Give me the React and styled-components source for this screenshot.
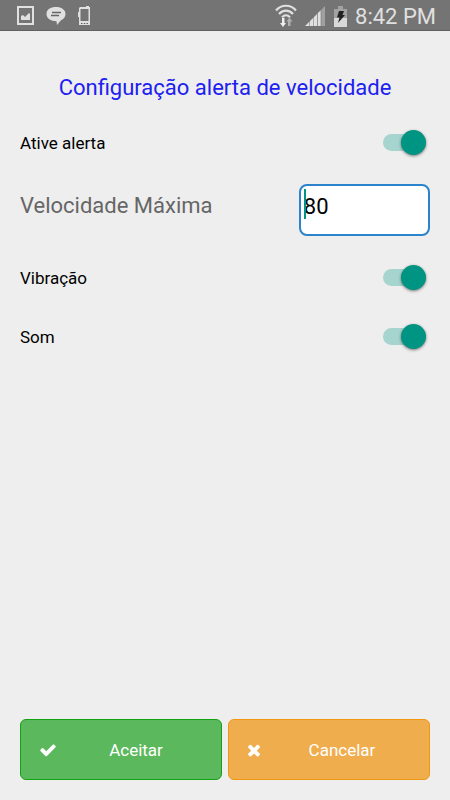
import React, { useState } from 'react'
import styled, { createGlobalStyle } from 'styled-components'

const App = () => {
    const [alertOn, setAlertOn] = useState(true)
    const [speed, setSpeed] = useState('80')
    const [vibrate, setVibrate] = useState(true)
    const [sound, setSound] = useState(true)

  return (
    <Screen>
        <GlobalStyle />
        <StatusBar>
            <StatusIcons>
                <PictureIcon />
                <MessageIcon />
                <PhoneIcon />
            </StatusIcons>
            <SystemIcons>
                <WifiIcon />
                <SignalIcon />
                <BatteryIcon />
                <Clock>8:42 PM</Clock>
            </SystemIcons>
        </StatusBar>
        <Form onSubmit={(e) => e.preventDefault()}>
            <Title>Configuração alerta de velocidade</Title>
            <Row>
                <Label htmlFor="alert">Ative alerta</Label>
                <Switch id="alert" checked={alertOn} onChange={(e) => setAlertOn(e.target.checked)} />
            </Row>
            <SpeedRow>
                <SpeedLabel htmlFor="speed">Velocidade Máxima</SpeedLabel>
                <SpeedBox>
                    <SpeedInput id="speed" inputMode="numeric" value={speed} onChange={(e) => setSpeed(e.target.value)} />
                    <Caret />
                </SpeedBox>
            </SpeedRow>
            <Row>
                <Label htmlFor="vibrate">Vibração</Label>
                <Switch id="vibrate" checked={vibrate} onChange={(e) => setVibrate(e.target.checked)} />
            </Row>
            <Row>
                <Label htmlFor="sound">Som</Label>
                <Switch id="sound" checked={sound} onChange={(e) => setSound(e.target.checked)} />
            </Row>
            <Actions>
                <Button type="submit" $color="#5cb85c" $border="#12a312">
                    <svg width="16" height="18" viewBox="121 0 1550 1792" fill="currentColor" aria-hidden="true">
                        <path d="M1671 566q0 40-28 68l-724 724-136 136q-28 28-68 28t-68-28l-136-136-362-362q-28-28-28-68t28-68l136-136q28-28 68-28t68 28l294 295 656-657q28-28 68-28t68 28l136 136q28 28 28 68z" />
                    </svg>
                    <ButtonText>Aceitar</ButtonText>
                </Button>
                <Button type="button" $color="#f0ad4e" $border="#f0960f">
                    <svg width="12" height="18" viewBox="302 0 1188 1792" fill="currentColor" aria-hidden="true">
                        <path d="M1490 1322q0 40-28 68l-136 136q-28 28-68 28t-68-28l-294-294-294 294q-28 28-68 28t-68-28l-136-136q-28-28-28-68t28-68l294-294-294-294q-28-28-28-68t28-68l136-136q28-28 68-28t68 28l294 294 294-294q28-28 68-28t68 28l136 136q28 28 28 68t-28 68l-294 294 294 294q28 28 28 68z" />
                    </svg>
                    <ButtonText>Cancelar</ButtonText>
                </Button>
            </Actions>
        </Form>
    </Screen>
  )
}

export default App

const PictureIcon = () => (
    <svg width="18" height="20" viewBox="0 0 18 20" aria-hidden="true">
        <path fill="#e0e0e0" fillRule="evenodd" d="M0 0h17v19H0zM2 2v15h13V2z" />
        <path fill="#e0e0e0" d="M4 14v-4l2-1 2 2 4-4 1 1v6z" />
    </svg>
)

const MessageIcon = () => (
    <svg width="20" height="20" viewBox="0 0 20 20" aria-hidden="true">
        <path fill="#e0e0e0" d="M10 1c5.500 0 9.500 2.700 9.500 7 0 3-1.800 5-4.500 6.200L11 19l-.5-3.800C4.800 15.200.5 12.500.5 8S4.500 1 10 1z" />
        <path stroke="#666" strokeWidth="1.300" d="M6 6.500h9M5 9.500h8" />
    </svg>
)

const PhoneIcon = () => (
    <svg width="14" height="20" viewBox="0 0 14 20" aria-hidden="true">
        <path fill="#e0e0e0" fillRule="evenodd" d="M3 1h6V0h3v1h1v18H2v-8H1V6h1V2zM3.500 3v12h8V3z" />
        <path stroke="#606060" d="M4 17.500h1.500M6.800 17.500h1.500M9.500 17.500H11" />
    </svg>
)

const WifiIcon = () => (
    <svg width="22" height="24" viewBox="0 0 22 24" aria-hidden="true">
        <g fill="none" stroke="#e0e0e0" strokeWidth="2.200">
            <path d="M1 6.500c5.500-6.300 14.500-6.300 20 0" />
            <path d="M4 10c4-4.500 10-4.500 14 0" />
            <path d="M7 13.200c2.500-2.600 5.500-2.600 8 0" />
        </g>
        <path fill="#f0f0f0" d="M7 14h2.500v5H11l-3 4-3-4h2z" />
        <path fill="#b0b0b0" d="M13 22v-4.500h-1.500l3-4 3 4h-2V22z" />
    </svg>
)

const SignalIcon = () => (
    <svg width="21" height="20" viewBox="0 0 21 20" aria-hidden="true">
        <path fill="#e0e0e0" d="M0 20l4.500-4.500V20zM5 15l3.500-3.500V20H5zM9 11l3-3v12H9zM12.700 7.300l3-3V20h-3z" />
        <path fill="#a0a0a0" d="M16.300 3.700L20 0v20h-3.700z" />
    </svg>
)

const BatteryIcon = () => (
    <svg width="13" height="21" viewBox="0 0 13 21" aria-hidden="true">
        <path fill="#a2a2a2" d="M4 0h5v3h4v9H0V3h4z" />
        <path fill="#d8d8d8" d="M0 12h13v9H0z" />
        <path fill="#222" d="M5 5h5L8.500 9H11l-7 8 1.500-5.500H3z" />
    </svg>
)

const Switch = (props) => (
    <SwitchBox>
        <SwitchInput type="checkbox" role="switch" {...props} />
    </SwitchBox>
)

const GlobalStyle = createGlobalStyle`
    * {
        box-sizing: border-box;
    }
    body {
        margin: 0;
        background-color: #eee;
        font-family: Roboto, 'Liberation Sans', sans-serif;
        color: #000;
    }
`
const Screen = styled.div`
    min-height: 100vh;
    display: flex;
    flex-direction: column;
`
const StatusBar = styled.header`
    height: 31px;
    padding: 2px 14px 0 17px;
    display: flex;
    align-items: center;
    justify-content: space-between;
    background-color: #747474;
    border-bottom: 1px solid #606060;
    color: #e0e0e0;
`
const StatusIcons = styled.div`
    display: flex;
    align-items: center;
    gap: 11px;
`
const SystemIcons = styled.div`
    display: flex;
    align-items: center;
    gap: 8px;
`
const Clock = styled.span`
    padding-top: 2px;
    font-size: 22px;
    line-height: 26px;
    white-space: nowrap;
`
const Form = styled.form`
    flex: 1;
    display: flex;
    flex-direction: column;
    padding: 40px 20px 20px;
`
const Title = styled.h1`
    margin: 0 0 8px;
    font-size: 22px;
    line-height: 34px;
    font-weight: 400;
    text-align: center;
    color: #2020f0;
`
const Row = styled.div`
    height: 59px;
    display: flex;
    align-items: center;
    justify-content: space-between;
`
const SpeedRow = styled(Row)`
    height: 76px;
    align-items: flex-start;
    padding-top: 12px;
`
const Label = styled.label`
    font-size: 17px;
    line-height: 24px;
`
const SpeedLabel = styled.label`
    font-size: 22px;
    line-height: 44px;
    color: #666;
`
const SpeedBox = styled.div`
    position: relative;
    width: 32%;
`
const SpeedInput = styled.input`
    display: block;
    width: 100%;
    height: 52px;
    padding: 0 3px 8px;
    border: 2px solid #2b83cb;
    border-radius: 8px;
    outline: none;
    background-color: #fff;
    font-family: inherit;
    font-size: 22px;
    color: #000;
    caret-color: #009482;
`
const Caret = styled.span`
    position: absolute;
    top: 5px;
    left: 5px;
    width: 2px;
    height: 30px;
    background-color: #009482;
`
const SwitchBox = styled.span`
    display: flex;
    padding-right: 4px;
`
const SwitchInput = styled.input`
    appearance: none;
    display: flex;
    align-items: center;
    width: 43px;
    height: 17px;
    margin: 0;
    border-radius: 9px;
    background-color: #bbb;
    cursor: pointer;

    &::before {
        content: '';
        width: 25px;
        height: 25px;
        flex-shrink: 0;
        border-radius: 50%;
        background-color: #f5f5f5;
        box-shadow: 0 1px 3px rgba(0, 0, 0, 0.5);
    }

    &:checked {
        justify-content: flex-end;
        background-color: #a6d4cf;
    }

    &:checked::before {
        background-color: #009482;
    }
`
const Actions = styled.div`
    display: flex;
    gap: 6px;
    margin-top: auto;
`
const Button = styled.button`
    flex: 1;
    height: 61px;
    padding: 0 5px 0 19px;
    display: flex;
    align-items: center;
    border: 1px solid ${(props) => props.$border};
    border-radius: 6px;
    background-color: ${(props) => props.$color};
    font-family: inherit;
    color: #fff;
    cursor: pointer;
`
const ButtonText = styled.span`
    flex: 1;
    font-size: 17px;
    line-height: 24px;
    text-align: center;
`
